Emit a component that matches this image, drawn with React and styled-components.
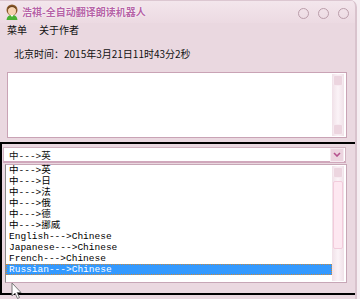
import React from 'react';
import styled, { createGlobalStyle } from 'styled-components';

const GlobalStyle = createGlobalStyle`
  html, body {
    margin: 0;
    padding: 0;
    background: #f6eef2;
    overflow: hidden;
  }
  body {
    font-family: "Noto Sans CJK SC", "Liberation Sans", sans-serif;
  }
`;

const Window = styled.div`
  position: relative;
  width: 355px;
  height: 299px;
  background: #ead8e0;
  border-right: 2px solid #d9c3cd;
  border-top-right-radius: 7px;
  overflow: hidden;
  font-size: 10px;
  color: #111;
`;

const TitleBar = styled.div`
  height: 22px;
  display: flex;
  align-items: center;
  padding: 0 6px 0 5px;
  background: linear-gradient(#f3e6ec, #ecdae2);
  border-top: 1px solid #dcc7d1;
`;

const Title = styled.span`
  margin-left: 3px;
  font-weight: bold;
  font-size: 10px;
  color: #b663a6;
  text-shadow: 0 0 2px #fff, 0 0 1px #fff;
  line-height: 14px;
`;

const Buttons = styled.div`
  margin-left: auto;
  display: flex;
  gap: 9px;
  padding-top: 2px;
`;

const CircleBtn = styled.span`
  width: 9px;
  height: 9px;
  border-radius: 50%;
  border: 1px solid #bb9daa;
`;

const MenuBar = styled.div`
  height: 14px;
  display: flex;
  gap: 12px;
  padding-left: 7px;
  line-height: 14px;
`;

const TimeRow = styled.div`
  margin-top: 10px;
  height: 14px;
  line-height: 14px;
  padding-left: 14px;
  font-size: 10px;
`;

const TextBox = styled.div`
  margin: 11px 0 0 7px;
  width: 338px;
  height: 64px;
  background: #fff;
  border: 1px solid #c9a3b5;
  display: flex;
  justify-content: flex-end;
`;

const ScrollBar = styled.div`
  width: 12px;
  margin: 1px 2px 1px 0;
  background: linear-gradient(90deg, #f0e1e8, #fbf3f7 50%, #f0e1e8);
  display: flex;
  flex-direction: column;
  justify-content: ${p => (p.$thumb ? 'flex-start' : 'space-between')};
`;

const ScrollKnob = styled.span`
  height: 9px;
  margin: 1px;
  border-radius: 2px;
  background: #ecd5df;
  border: 1px solid #f6eaf0;
`;

const ScrollThumb = styled.span`
  height: 66px;
  margin: 2px 1px;
  border-radius: 2px;
  background: #fde8f1;
  border: 1px solid #f2cbdb;
`;

const Frame = styled.div`
  margin-top: 4px;
  width: 400px;
  height: 149px;
  border: 2px solid #000;
  border-right: none;
  padding: 3px 0 0 1px;
  box-sizing: border-box;
  height: 153px;
`;

const Combo = styled.div`
  width: 343px;
  height: 16px;
  box-sizing: border-box;
  background: #fff;
  border: 1px solid #d2b3c1;
  border-bottom: 2px solid #d0a7bb;
  display: flex;
  align-items: center;
  padding-left: 5px;
  font-family: "Liberation Mono", "Noto Sans CJK SC", monospace;
  font-size: 9.5px;
`;

const ArrowBtn = styled.span`
  margin-left: auto;
  margin-right: 1px;
  width: 12px;
  height: 12px;
  background: #ecd4df;
  border: 1px solid #f5e9ef;
  display: flex;
  align-items: center;
  justify-content: center;
`;

const List = styled.div`
  margin: 1px 0 0 2px;
  width: 342px;
  height: 119px;
  box-sizing: border-box;
  background: #fff;
  border: 1px solid #c7a6b6;
  border-left-color: #8a8a8a;
  display: flex;
`;

const Items = styled.div`
  flex: 1;
  padding-top: 0;
  font-family: "Liberation Mono", "Noto Sans CJK SC", monospace;
  font-size: 9.5px;
`;

const Item = styled.div`
  height: 11px;
  line-height: 11px;
  padding-left: 3px;
  white-space: pre;
  background: ${p => (p.$sel ? '#3399ff' : 'transparent')};
  color: ${p => (p.$sel ? '#fff' : '#000')};
  outline: ${p => (p.$sel ? '1px dotted #c98a40' : 'none')};
  outline-offset: -1px;
`;

const Cursor = styled.svg`
  position: absolute;
  left: 11px;
  top: 282px;
`;

const Avatar = () => (
  <svg width="14" height="16" viewBox="0 0 14 16">
    <ellipse cx="7" cy="6" rx="5.5" ry="5.5" fill="#8a5a2a" />
    <ellipse cx="7" cy="7" rx="4" ry="4.2" fill="#f6d2b0" />
    <path d="M3 5 Q7 1 11 5 L11 3.5 Q7 0 3 3.5Z" fill="#6b4420" />
    <path d="M1.5 16 Q2 11 7 11 Q12 11 12.5 16Z" fill="#49b134" />
    <path d="M5.5 11 L7 13 L8.5 11Z" fill="#fff" />
  </svg>
);

const items = [
  '中--->英',
  '中--->日',
  '中--->法',
  '中--->俄',
  '中--->德',
  '中--->挪威',
  'English--->Chinese',
  'Japanese--->Chinese',
  'French--->Chinese',
  'Russian--->Chinese',
];

export default function App() {
  return (
    <>
      <GlobalStyle />
      <Window>
        <TitleBar>
          <Avatar />
          <Title>浩祺-全自动翻译朗读机器人</Title>
          <Buttons>
            <CircleBtn />
            <CircleBtn />
            <CircleBtn />
          </Buttons>
        </TitleBar>
        <MenuBar>
          <span>菜单</span>
          <span>关于作者</span>
        </MenuBar>
        <TimeRow>北京时间：2015年3月21日11时43分2秒</TimeRow>
        <TextBox>
          <ScrollBar>
            <ScrollKnob />
            <ScrollKnob />
          </ScrollBar>
        </TextBox>
        <Frame>
          <Combo>
            中---&gt;英
            <ArrowBtn>
              <svg width="8" height="5" viewBox="0 0 8 5">
                <path d="M1 1 L4 4 L7 1" stroke="#b5528e" strokeWidth="1.6" fill="none" />
              </svg>
            </ArrowBtn>
          </Combo>
          <List>
            <Items>
              {items.map((t, i) => (
                <Item key={t} $sel={i === items.length - 1}>{t}</Item>
              ))}
            </Items>
            <ScrollBar $thumb>
              <ScrollKnob />
              <ScrollThumb />
            </ScrollBar>
          </List>
        </Frame>
        <Cursor width="12" height="18" viewBox="0 0 12 18">
          <path d="M1 1 L1 14 L4 11 L6.5 16.5 L8.5 15.5 L6 10.5 L10 10.5 Z" fill="#fff" stroke="#777" strokeWidth="1" />
        </Cursor>
      </Window>
    </>
  );
}
